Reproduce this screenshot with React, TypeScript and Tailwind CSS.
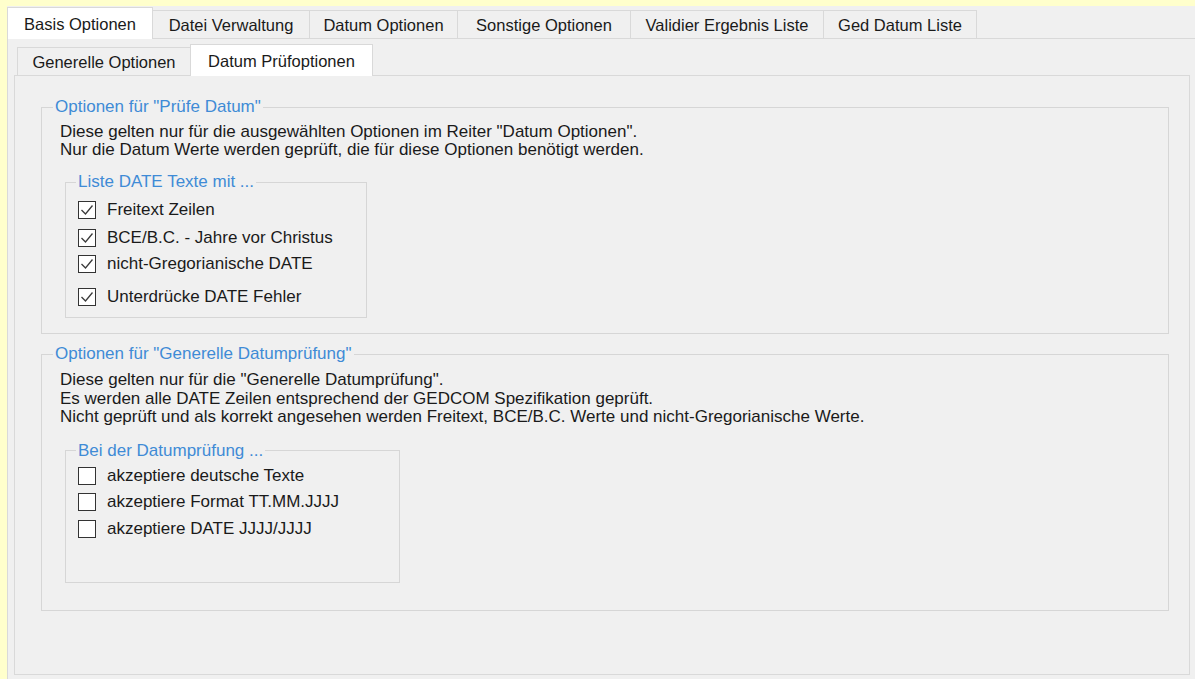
import type { ReactNode } from 'react';

const topTabs = [
	{ label: 'Basis Optionen', width: 146 },
	{ label: 'Datei Verwaltung', width: 157 },
	{ label: 'Datum Optionen', width: 148 },
	{ label: 'Sonstige Optionen', width: 173 },
	{ label: 'Validier Ergebnis Liste', width: 193 },
	{ label: 'Ged Datum Liste', width: 153 },
];

function TopTab({ label, width, active }: { label: string; width: number; active?: boolean }) {
	if (active) {
		return (
			<div
				className="h-[32px] flex items-center justify-center bg-white border-x border-t border-[#d9d9d9] -mb-px relative z-10"
				style={{ width }}
			>
				{label}
			</div>
		);
	}
	return (
		<div
			className="h-[28px] flex items-center justify-center bg-[#f0f0f0] border-t border-r border-[#d9d9d9]"
			style={{ width }}
		>
			{label}
		</div>
	);
}

function CheckBox({ label, checked }: { label: string; checked?: boolean }) {
	return (
		<div className="flex items-center h-[18px] gap-[11px]">
			<div className="w-[18px] h-[18px] border border-[#333] bg-white flex items-center justify-center">
				{checked && (
					<svg width="16" height="16" viewBox="0 0 16 16" fill="none">
						<polyline points="2.5,8 6.5,12 13.5,3.5" stroke="#3a3a3a" strokeWidth="1.3" />
					</svg>
				)}
			</div>
			<span>{label}</span>
		</div>
	);
}

function GroupBox({ title, className, children }: { title: string; className?: string; children: ReactNode }) {
	return (
		<fieldset className={`border border-[#d6d6d6] ${className ?? ''}`}>
			<legend className="px-[2px] leading-[18px] text-[#3f8bd6]">{title}</legend>
			{children}
		</fieldset>
	);
}

export default function App() {
	return (
		<div
			className="h-[679px] w-[1195px] bg-[#ffffcc] pt-[6px] pl-[7px] overflow-hidden text-[17px] leading-[18px] text-[#1a1a1a]"
			style={{ fontFamily: '"Liberation Sans", Arial, sans-serif' }}
		>
			<div className="h-full bg-[#f0f0f0] flex flex-col">
				{/* main tab strip */}
				<div className="flex items-end h-[32px] text-[16.5px]">
					{topTabs.map((t, i) => (
						<TopTab key={t.label} label={t.label} width={t.width} active={i === 0} />
					))}
				</div>

				<div className="flex-1 border-t border-l border-[#d9d9d9] pl-[6px] pr-[5px] pb-[4px] pt-[4px] flex flex-col">
					{/* sub tab strip */}
					<div className="flex items-end h-[32px] pl-[3px] text-[16.5px]">
						<div className="h-[28px] w-[173px] flex items-center justify-center bg-[#f0f0f0] border-t border-l border-[#d9d9d9]">
							Generelle Optionen
						</div>
						<div className="h-[32px] w-[183px] flex items-center justify-center bg-white border-x border-t border-[#d9d9d9] -mb-px relative z-10">
							Datum Prüfoptionen
						</div>
					</div>

					<div className="flex-1 border border-[#d9d9d9] pl-[26px] pr-[20px] pt-[22px]">
						<GroupBox title={'Optionen für "Prüfe Datum"'} className="pl-[11px] pb-[15px]">
							<div className="pl-[7px]">
								<div className="mt-[7px]">
									<p>Diese gelten nur für die ausgewählten Optionen im Reiter "Datum Optionen".</p>
									<p>Nur die Datum Werte werden geprüft, die für diese Optionen benötigt werden.</p>
								</div>
								<GroupBox title="Liste DATE Texte mit ..." className="ml-[5px] mt-[14px] w-[302px] pl-[10px] pb-[11px]">
									<div className="pl-[2px] mt-[10px] flex flex-col">
										<CheckBox label="Freitext Zeilen" checked />
										<div className="h-[10px]" />
										<CheckBox label="BCE/B.C. - Jahre vor Christus" checked />
										<div className="h-[8px]" />
										<CheckBox label="nicht-Gregorianische DATE" checked />
										<div className="h-[15px]" />
										<CheckBox label="Unterdrücke DATE Fehler" checked />
									</div>
								</GroupBox>
							</div>
						</GroupBox>

						<GroupBox title={'Optionen für "Generelle Datumprüfung"'} className="mt-[11px] pl-[11px] pb-[27px]">
							<div className="pl-[7px]">
								<div className="mt-[8px] leading-[18.5px]">
									<p>Diese gelten nur für die "Generelle Datumprüfung".</p>
									<p>Es werden alle DATE Zeilen entsprechend der GEDCOM Spezifikation geprüft.</p>
									<p>Nicht geprüft und als korrekt angesehen werden Freitext, BCE/B.C. Werte und nicht-Gregorianische Werte.</p>
								</div>
								<GroupBox title="Bei der Datumprüfung ..." className="ml-[5px] mt-[15px] w-[335px] pl-[10px] pb-[44px]">
									<div className="pl-[2px] mt-[7px] flex flex-col gap-[8.5px]">
										<CheckBox label="akzeptiere deutsche Texte" />
										<CheckBox label="akzeptiere Format TT.MM.JJJJ" />
										<CheckBox label="akzeptiere DATE JJJJ/JJJJ" />
									</div>
								</GroupBox>
							</div>
						</GroupBox>
					</div>
				</div>
			</div>
		</div>
	);
}
